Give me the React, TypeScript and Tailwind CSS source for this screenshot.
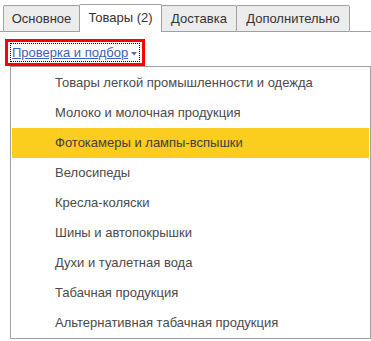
const items = [
  "Товары легкой промышленности и одежда",
  "Молоко и молочная продукция",
  "Фотокамеры и лампы-вспышки",
  "Велосипеды",
  "Кресла-коляски",
  "Шины и автопокрышки",
  "Духи и туалетная вода",
  "Табачная продукция",
  "Альтернативная табачная продукция",
];

const App = () => {
  return (
    <div className="w-[371px] h-[341px] bg-white overflow-hidden font-['Liberation_Sans',Arial,sans-serif] text-[13px]">
      {/* tabs */}
      <div className="flex items-end pt-[4px] h-[32px]">
        <div className="w-[3px] h-px border-b border-[#a0a0a0]"></div>
        <div className="w-[77px] h-[27px] flex items-center justify-center bg-[#ececec] border border-[#a0a0a0] rounded-t-[2px] text-[#333]">
          Основное
        </div>
        <div className="w-[83px] h-[28px] -ml-px flex items-center justify-center bg-white border border-b-0 border-[#a0a0a0] rounded-t-[2px] text-[#333] pb-[1px]">
          Товары (2)
        </div>
        <div className="w-[76px] h-[27px] -ml-px flex items-center justify-center bg-[#ececec] border border-[#a0a0a0] rounded-t-[2px] text-[#333]">
          Доставка
        </div>
        <div className="w-[114px] h-[27px] -ml-px flex items-center justify-center bg-[#ececec] border border-[#a0a0a0] rounded-t-[2px] text-[#333]">
          Дополнительно
        </div>
        <div className="flex-1 h-px border-b border-[#a0a0a0]"></div>
      </div>

      {/* link in red frame */}
      <div className="mt-[7px] ml-[5px] w-[140px] h-[27px] border-[3px] border-[#ff0000] flex items-center pl-[2px]">
        <div className="h-[19px] w-[130px] border border-dotted border-black flex items-center pl-[1px]">
          <span className="text-[#3b62b8] underline underline-offset-1 decoration-[#3b62b8]">
            Проверка и подбор
          </span>
          <svg width="6" height="4" viewBox="0 0 6 4" className="ml-[3px] mt-[2px]">
            <path d="M0 0 H6 L3 3.5 Z" fill="#5a6f9a" />
          </svg>
        </div>
      </div>

      {/* dropdown list */}
      <div className="ml-[10px] w-[361px] border border-[#a0a0a0] p-[1px] pb-0">
        {items.map((item, i) => (
          <div
            key={item}
            className={
              i === 2
                ? "h-[30px] flex items-center pl-[43px] bg-[#fbcd1f] text-[#404040]"
                : "h-[30px] flex items-center pl-[43px] text-[#4a4a4a]"
            }
          >
            {item}
          </div>
        ))}
      </div>
    </div>
  );
};

export default App;
